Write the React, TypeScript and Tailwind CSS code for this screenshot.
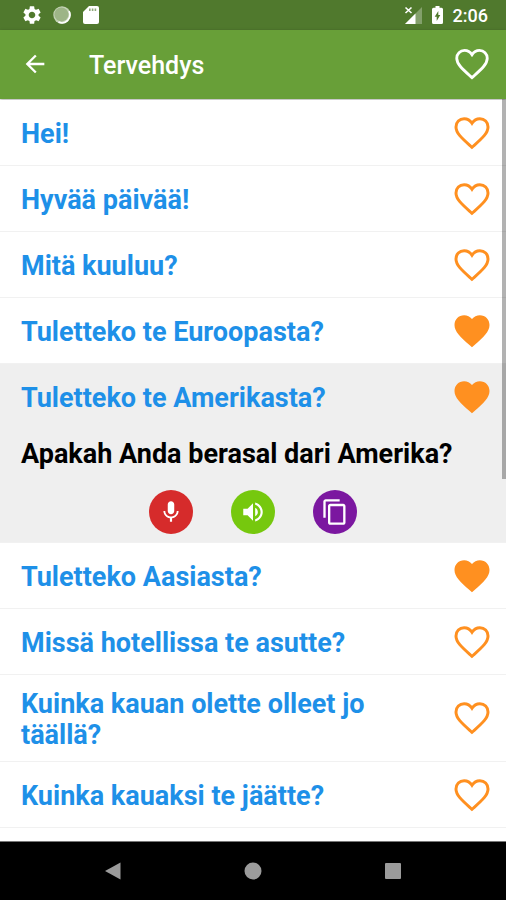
import { useState } from "react";
import {
  MdArrowBack,
  MdContentCopy,
  MdFavorite,
  MdMic,
  MdSettings,
  MdVolumeUp,
} from "react-icons/md";

const phrases = [
  { id: 1, text: "Hei!", favorite: false },
  { id: 2, text: "Hyvää päivää!", favorite: false },
  { id: 3, text: "Mitä kuuluu?", favorite: false },
  { id: 4, text: "Tuletteko te Euroopasta?", favorite: true },
  {
    id: 5,
    text: "Tuletteko te Amerikasta?",
    translation: "Apakah Anda berasal dari Amerika?",
    favorite: true,
  },
  { id: 6, text: "Tuletteko Aasiasta?", favorite: true },
  { id: 7, text: "Missä hotellissa te asutte?", favorite: false },
  { id: 8, text: "Kuinka kauan olette olleet jo täällä?", favorite: false },
  { id: 9, text: "Kuinka kauaksi te jäätte?", favorite: false },
];

function HeartOutline({ className }: { className: string }) {
  return (
    <svg className={className} viewBox="0 0 24 24" fill="none" stroke="currentColor" strokeWidth="1.7">
      <path d="M12 20.2l-.85-.78C6 14.8 2.85 12 2.85 8.5c0-2.65 2-4.65 4.65-4.65 1.8 0 3.5 1 4.5 2.55 1-1.55 2.7-2.55 4.5-2.55 2.65 0 4.65 2 4.65 4.65 0 3.5-3.15 6.3-8.3 10.92z" />
    </svg>
  );
}

function StatusBar() {
  return (
    <div className="flex h-[30px] items-center justify-between bg-[#50792d] pr-[18px] pl-[21px] text-white">
      <div className="flex items-center gap-2.5">
        <MdSettings className="h-[22px] w-[22px]" />
        <svg className="h-[18px] w-[18px]" viewBox="0 0 18 18">
          <circle cx="9" cy="9" r="8.7" fill="#c3d2b5" />
          <circle cx="8.4" cy="8.4" r="7" fill="#9db587" />
          <path d="M16 5.2A8 8 0 0 1 5.5 16.1" fill="none" stroke="#fff" strokeWidth="1.6" />
        </svg>
        <svg className="ml-0.5 h-[18px] w-4" viewBox="0 0 16 18">
          <path d="M6 0h8a2 2 0 0 1 2 2v14a2 2 0 0 1-2 2H2a2 2 0 0 1-2-2V6z" fill="#fff" />
          <path d="M6 2.5h1.6v2.5H6zM8.8 2.5h1.6v2.5H8.8zM11.6 2.5h1.6v2.5h-1.6z" fill="#8fa97c" />
        </svg>
      </div>
      <div className="flex items-center">
        <svg className="mr-2.5 h-[18px] w-[18px]" viewBox="0 0 18 18">
          <path d="M18 1v17H1z" fill="#83a06b" />
          <path d="M11.5 7.5V18H1z" fill="#fff" />
          <path d="M1.5 1.5l6 5.5M7.5 1.5l-6 5.5" stroke="#fff" strokeWidth="1.6" />
        </svg>
        <svg className="mr-2.5 h-[18px] w-[11px]" viewBox="0 0 11 18">
          <path d="M3.5 0h4v1.8h2A1.5 1.5 0 0 1 11 3.3v13.2A1.5 1.5 0 0 1 9.5 18h-8A1.5 1.5 0 0 1 0 16.5V3.3a1.5 1.5 0 0 1 1.5-1.5h2z" fill="#fff" />
          <path d="M6.3 5v4h2L4.7 15v-4.3h-2z" fill="#50792d" />
        </svg>
        <span className="pt-0.5 text-lg leading-6 font-medium">2:06</span>
      </div>
    </div>
  );
}

function Header() {
  return (
    <header className="relative flex h-[69px] items-center bg-[#689f38] pr-3.5 pl-[21px] text-white shadow-[0_1px_3px_rgba(0,0,0,0.35)]">
      <button type="button" aria-label="Takaisin" className="pb-0.5">
        <MdArrowBack className="h-7 w-7" />
      </button>
      <h1 className="ml-10 flex-1 pt-0.5 text-[25px] leading-8 font-medium">Tervehdys</h1>
      <button type="button" aria-label="Suosikit" className="pb-0.5">
        <HeartOutline className="h-10 w-10" />
      </button>
    </header>
  );
}

function PhraseActions() {
  return (
    <div className="flex justify-center gap-[38px] pt-5 pb-2">
      <button type="button" aria-label="Nauhoita" className="flex h-11 w-11 items-center justify-center rounded-full bg-[#d62b2b] text-white">
        <MdMic className="h-[26px] w-[26px]" />
      </button>
      <button type="button" aria-label="Kuuntele" className="flex h-11 w-11 items-center justify-center rounded-full bg-[#76c80e] text-white">
        <MdVolumeUp className="h-[26px] w-[26px]" />
      </button>
      <button type="button" aria-label="Kopioi" className="flex h-11 w-11 items-center justify-center rounded-full bg-[#7b17a0] text-white">
        <MdContentCopy className="h-7 w-7" />
      </button>
    </div>
  );
}

export default function App() {
  const [favorites, setFavorites] = useState(phrases.filter((p) => p.favorite).map((p) => p.id));

  const toggleFavorite = (id: number) => {
    setFavorites((prev) => (prev.includes(id) ? prev.filter((f) => f !== id) : [...prev, id]));
  };

  return (
    <div className="flex min-h-screen flex-col bg-white font-['Roboto',sans-serif]">
      <StatusBar />
      <Header />

      <main className="relative flex-1 pt-px">
        <ul>
          {phrases.map((phrase) => (
            <li
              key={phrase.id}
              className={`border-b border-[#f1f1f1] ${phrase.translation ? "bg-[#efefef]" : "bg-white"}`}
            >
              <div className="flex min-h-[65px] items-center gap-4 py-2.5 pr-[13px] pl-[21px]">
                <p className="flex-1 pt-1 text-[27px] leading-[31px] font-bold text-[#1e90e8]">{phrase.text}</p>
                <button
                  type="button"
                  aria-label="Suosikki"
                  className="-my-2 text-[#ff9020]"
                  onClick={() => toggleFavorite(phrase.id)}
                >
                  {favorites.includes(phrase.id) ? (
                    <MdFavorite className="h-[42px] w-[42px]" />
                  ) : (
                    <HeartOutline className="h-[42px] w-[42px]" />
                  )}
                </button>
              </div>
              {phrase.translation && (
                <div className="pt-2.5">
                  <p className="pr-3 pl-[21px] text-[27px] leading-[31px] font-bold text-black">
                    {phrase.translation}
                  </p>
                  <PhraseActions />
                </div>
              )}
            </li>
          ))}
        </ul>
        {/* scroll thumb */}
        <div className="absolute top-0 right-0 h-[380px] w-1 bg-black/30" />
      </main>

      <nav className="flex h-[59px] items-center justify-center gap-[120px] border-t border-[#777] bg-black text-[#9b9b9b]">
        <button type="button" aria-label="Takaisin">
          <svg className="h-5 w-5" viewBox="0 0 20 20" fill="currentColor">
            <path d="M17.5 1.5v17L2 10z" />
          </svg>
        </button>
        <button type="button" aria-label="Koti">
          <svg className="h-5 w-5" viewBox="0 0 20 20" fill="currentColor">
            <circle cx="10" cy="10" r="8.5" />
          </svg>
        </button>
        <button type="button" aria-label="Viimeisimmät">
          <svg className="h-5 w-5" viewBox="0 0 20 20" fill="currentColor">
            <rect x="2" y="2" width="16" height="16" rx="1" />
          </svg>
        </button>
      </nav>
    </div>
  );
}
